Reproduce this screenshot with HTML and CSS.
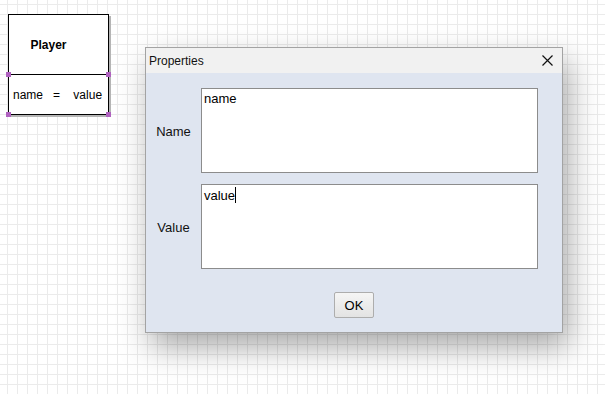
FILE: index.html
```html
<!DOCTYPE html>
<html>
<head>
<meta charset="utf-8">
<link rel="stylesheet" href="styles.css">
</head>
<body>
<div class="canvas">
  <div class="uml">
    <div class="uml-title">Player</div>
    <div class="uml-attrs">name&nbsp;&nbsp;&nbsp;=&nbsp;&nbsp;&nbsp;&nbsp;value</div>
    <span class="handle h-tl"></span>
    <span class="handle h-tr"></span>
    <span class="handle h-bl"></span>
    <span class="handle h-br"></span>
  </div>

  <div class="dialog">
    <div class="titlebar">
      <span class="title">Properties</span>
      <svg class="close" width="11" height="11" viewBox="0 0 11 11"><path d="M0.5 0.5 L10.5 10.5 M10.5 0.5 L0.5 10.5" stroke="#111" stroke-width="1.2" fill="none"/></svg>
    </div>
    <div class="body">
      <div class="form">
        <div class="label">Name</div>
        <div class="field">name</div>
        <div class="label">Value</div>
        <div class="field">value<span class="caret"></span></div>
      </div>
      <div class="actions">
        <div class="btn">OK</div>
      </div>
    </div>
  </div>
</div>
</body>
</html>
```

FILE: styles.css
```css
html, body {
  margin: 0;
  padding: 0;
}
body {
  width: 605px;
  height: 394px;
  overflow: hidden;
  font-family: "Liberation Sans", Arial, sans-serif;
  font-size: 12px;
  color: #000;
  background-color: #ffffff;
  background-image:
    linear-gradient(to right, #ebebeb 1px, transparent 1px),
    linear-gradient(to bottom, #ebebeb 1px, transparent 1px);
  background-size: 10px 10px;
  background-position: 7px 4px;
}
.canvas {
  position: relative;
  width: 605px;
  height: 394px;
}
.uml {
  position: absolute;
  left: 8px;
  top: 14px;
  width: 99px;
  height: 99px;
  border: 1px solid #000;
  background: #fff;
  box-shadow: 2px 2px 0 #b5b5b5;
  display: flex;
  flex-direction: column;
}
.uml-title {
  height: 60px;
  box-sizing: border-box;
  border-bottom: 1px solid #000;
  display: flex;
  align-items: center;
  justify-content: center;
  font-weight: bold;
  font-size: 12px;
  padding-right: 20px;
  padding-top: 1px;
}
.uml-attrs {
  flex: 1;
  display: flex;
  align-items: center;
  padding-left: 4px;
  font-size: 12px;
  white-space: nowrap;
}
.handle {
  position: absolute;
  width: 5px;
  height: 5px;
  background: #b062c0;
}
.h-tl { left: -3px; top: 57px; }
.h-tr { right: -3px; top: 57px; }
.h-bl { left: -3px; bottom: -3px; }
.h-br { right: -3px; bottom: -3px; }

.dialog {
  position: absolute;
  left: 145px;
  top: 47px;
  width: 416px;
  height: 284px;
  border: 1px solid #a3a3a3;
  background: #dfe5f0;
  box-shadow: 6px 14px 30px rgba(0, 0, 0, 0.34);
  display: flex;
  flex-direction: column;
}
.titlebar {
  height: 25px;
  background: #f1f1f1;
  display: flex;
  align-items: center;
  justify-content: space-between;
  padding: 0 9px 0 3px;
}
.title {
  font-size: 12px;
  color: #111;
}
.close {
  display: block;
}
.body {
  flex: 1;
  display: flex;
  flex-direction: column;
  padding: 15px 24px 12px 0;
}
.form {
  display: grid;
  grid-template-columns: 55px 1fr;
  grid-auto-rows: 85px;
  row-gap: 11px;
}
.label {
  display: flex;
  align-items: center;
  justify-content: center;
  font-size: 13px;
  color: #111;
  padding-top: 1px;
}
.field {
  border: 1px solid #8c8c8c;
  background: #fff;
  padding: 2px 2px;
  font-size: 13px;
  line-height: 15px;
}
.caret {
  display: inline-block;
  width: 1px;
  height: 16px;
  background: #000;
  vertical-align: -3px;
}
.actions {
  display: flex;
  justify-content: center;
  padding-top: 23px;
  padding-left: 24px;
}
.btn {
  width: 38px;
  height: 24px;
  border: 1px solid #adadad;
  border-radius: 2px;
  background: linear-gradient(#f5f5f5, #e3e3e3);
  display: flex;
  align-items: center;
  justify-content: center;
  font-size: 13px;
}
```
